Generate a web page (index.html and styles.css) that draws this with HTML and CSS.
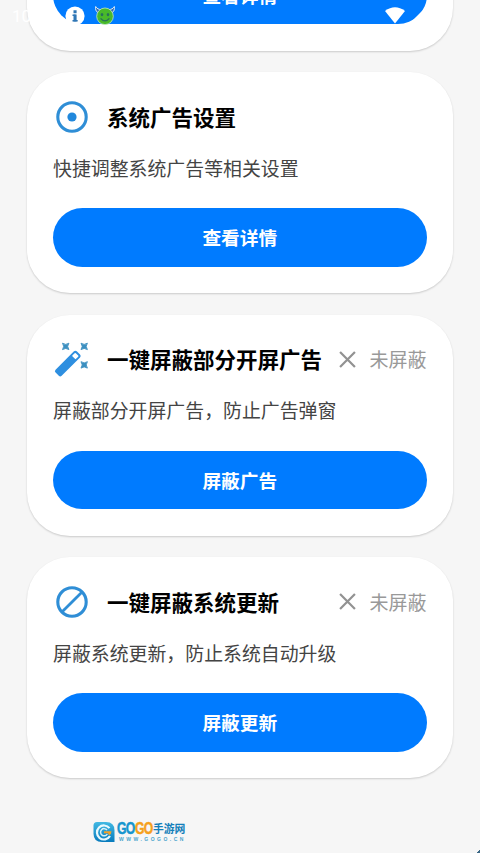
FILE: index.html
```html
<!DOCTYPE html>
<html lang="zh-CN">
<head>
<meta charset="utf-8">
<title>系统广告设置</title>
<link rel="stylesheet" href="styles.css">
</head>
<body>
<div class="screen">
  <div class="status-bar">
    <span class="clock">10</span>
    <svg class="info" viewBox="0 0 20 20"><circle cx="10" cy="10" r="9.6" fill="#fff"/><path d="M8.5 4.2h3.1v3H8.500zM8.500 8.600h3.1v6.800H8.500z" fill="#2f76b5"/><path d="M7.500 8.600h3v1.500h-3zM7.500 14h5.200v1.500H7.500z" fill="#2f76b5"/></svg>
    <svg class="imp" viewBox="0 0 22 21"><path d="M4.4 8C1.8 6.6 1.2 4 1.7 1.5 2.8 4 5 4 7 5zM17.6 8c2.6-1.4 3.2-4 2.7-6.5C19.2 4 17 4 15 5z" fill="#356bb0" stroke="#dcebf5" stroke-width="1"/><circle cx="11" cy="11.3" r="8.3" fill="#49b92a" stroke="#bfe6c0" stroke-width=".8"/><path d="M6.6 13.3q4.4 5.2 8.8 0" fill="none" stroke="#27715a" stroke-width="1.3"/><ellipse cx="8" cy="9.6" rx="1.3" ry="1.7" fill="#27715a"/><ellipse cx="14" cy="9.6" rx="1.3" ry="1.7" fill="#27715a"/></svg>
    <svg class="wifi" viewBox="0 0 20 17"><path d="M0 4Q10-3.5 20 4L10 16.5z" fill="#fff"/></svg>
    <svg class="signal" viewBox="0 0 17 17"><path d="M17 0v17H0z" fill="#fff"/></svg>
  </div>

  <main class="cards">
    <section class="card card-cut">
      <button class="action">查看详情</button>
    </section>

    <section class="card">
      <header class="head">
        <svg class="icon" viewBox="0 0 38 38"><circle cx="19" cy="19" r="14.2" fill="none" stroke="#2f8ed6" stroke-width="3.1"/><circle cx="19" cy="19" r="4.6" fill="#2188dc"/></svg>
        <h2>系统广告设置</h2>
      </header>
      <p>快捷调整系统广告等相关设置</p>
      <button class="action">查看详情</button>
    </section>

    <section class="card">
      <header class="head">
        <svg class="icon" viewBox="0 0 38 38"><g transform="translate(14.8 23.6) rotate(-45)"><rect x="-15" y="-4.3" width="30" height="8.6" rx="2" fill="#2e8fe0"/><rect x="8.4" y="-2.5" width="4.6" height="5" rx=".8" fill="#fff"/></g><path d="M9.500 3.200q3.200 2.400 6.400 0-2.400 3.200 0 6.400-3.200-2.400-6.400 0 2.400-3.200 0-6.400zM28 3.200q3.200 2.400 6.400 0-2.400 3.200 0 6.400-3.200-2.400-6.400 0 2.400-3.200 0-6.400zM28 21.700q3.200 2.400 6.400 0-2.400 3.200 0 6.400-3.200-2.400-6.400 0 2.400-3.200 0-6.400z" fill="#3b8fc0" stroke="#3b8fc0" stroke-width=".9" stroke-linejoin="round"/></svg>
        <h2>一键屏蔽部分开屏广告</h2>
        <span class="state"><svg class="cross" viewBox="0 0 16 16"><path d="M1 1l14 14M15 1L1 15" stroke="#929292" stroke-width="2.1"/></svg>未屏蔽</span>
      </header>
      <p>屏蔽部分开屏广告，防止广告弹窗</p>
      <button class="action">屏蔽广告</button>
    </section>

    <section class="card">
      <header class="head">
        <svg class="icon" viewBox="0 0 38 38"><circle cx="19" cy="19" r="14.2" fill="none" stroke="#2f8ed6" stroke-width="3.1"/><path d="M9.2 28.8L28.8 9.2" stroke="#2f8ed6" stroke-width="2.8"/></svg>
        <h2>一键屏蔽系统更新</h2>
        <span class="state"><svg class="cross" viewBox="0 0 16 16"><path d="M1 1l14 14M15 1L1 15" stroke="#929292" stroke-width="2.1"/></svg>未屏蔽</span>
      </header>
      <p>屏蔽系统更新，防止系统自动升级</p>
      <button class="action">屏蔽更新</button>
    </section>
  </main>

  <footer class="brand">
    <svg class="logo" viewBox="0 0 22 22"><defs><linearGradient id="g" x2="0" y2="1"><stop stop-color="#42b9e3"/><stop offset="1" stop-color="#087bbd"/></linearGradient></defs><path d="M4 1h9q8.500 0 8.500 8.500V21H9Q.5 21 .5 12.500V4.500Q.5 1 4 1z" fill="url(#g)"/><path d="M16.5 7.2A7 7 0 1 0 17 15" fill="none" stroke="#eaf9fd" stroke-width="2.2"/><path d="M14 9a3.6 3.6 0 1 0 .3 4" fill="none" stroke="#d8f1f8" stroke-width="1.5"/><path d="M11 10.3h7.5q0 3-2.5 4l-1-2h-4z" fill="#f3a12b"/></svg>
    <div class="brand-text">
      <div class="name"><b class="go-blue">GO</b><b class="go-orange">GO</b><b class="cn">手游网</b></div>
      <div class="url">WWW.GOGO.CN</div>
    </div>
  </footer>
  <div class="corner"></div>
</div>
</body>
</html>
```

FILE: styles.css
```css
* { box-sizing: border-box; }
body {
  margin: 0;
  background: #f6f6f6;
  font-family: "Noto Sans CJK SC", sans-serif;
}
.screen {
  position: relative;
  height: 853px;
  overflow: hidden;
}
.status-bar {
  position: absolute;
  z-index: 2;
  top: 0;
  left: 0;
  display: flex;
  align-items: flex-start;
  width: 427px;
  height: 32px;
  padding: 6px 0 0 12px;
}
.clock {
  width: 53px;
  color: #fff;
  font: 17px/20px Roboto, sans-serif;
}
.info { width: 20px; height: 20px; }
.imp { width: 22px; height: 21px; margin-left: 9px; margin-top: -1px; }
.wifi { width: 20px; height: 17px; margin: 1px 3px 0 auto; }
.signal { width: 19px; height: 19px; margin-top: 0; margin-right: 0; }
.cards {
  display: flex;
  flex-direction: column;
  gap: 21.5px;
  padding: 0 27px;
}
.card {
  display: flex;
  flex-direction: column;
  height: 221px;
  padding: 26.5px 26.5px 26.5px 26px;
  border-radius: 43px;
  background: #fff;
  box-shadow: 0 1px 2px rgba(0, 0, 0, .18);
}
.card-cut {
  justify-content: flex-end;
  height: 150px;
  margin-top: -99.5px;
}
.head {
  display: flex;
  align-items: center;
  height: 38px;
  margin-top: -.8px;
}
.icon {
  flex: none;
  width: 38px;
  height: 38px;
  margin-right: 16px;
}
h2 {
  margin: 0;
  color: #000;
  font-size: 21.5px;
  line-height: 38px;
  font-weight: 700;
  white-space: nowrap;
}
.state {
  display: flex;
  align-items: center;
  margin-left: auto;
  color: #999;
  font-size: 19px;
  line-height: 36px;
  white-space: nowrap;
}
.cross { width: 17px; height: 17px; margin-right: 13px; }
p {
  margin: 18px 0 0;
  height: 28px;
  color: #444;
  font-size: 18.9px;
  line-height: 28px;
  white-space: nowrap;
}
.action {
  flex: none;
  width: 100%;
  height: 58.5px;
  margin-top: auto;
  padding: 0;
  border: 0;
  border-radius: 30px;
  background: #007bff;
  color: #fff;
  font: 700 18.7px/58px "Noto Sans CJK SC", sans-serif;
}
.brand {
  display: flex;
  align-items: center;
  gap: 2px;
  height: 24px;
  margin: 42px 0 0 93px;
}
.logo { width: 22px; height: 22px; }
.brand-text { width: 72px; }
.name {
  display: flex;
  align-items: center;
  height: 15px;
  white-space: nowrap;
}
.go-blue, .go-orange {
  flex: none;
  width: 18px;
  font: 700 17px/15px "Liberation Sans", sans-serif;
  letter-spacing: -1px;
  -webkit-text-stroke: .5px currentColor;
  transform: scaleX(.72);
  transform-origin: left;
}
.go-blue { color: #1595ce; }
.go-orange { color: #f5a01c; }
.cn {
  color: #147fba;
  font-size: 10.8px;
  line-height: 15px;
}
.url {
  padding-left: 2px;
  color: #4ba5cd;
  font: 700 5px/7px "Liberation Sans", sans-serif;
  letter-spacing: 2.5px;
  white-space: nowrap;
}
.corner {
  position: absolute;
  right: 0;
  bottom: 0;
  width: 3px;
  height: 4px;
  background: linear-gradient(135deg, transparent 50%, #3b6785 50%);
}
```
